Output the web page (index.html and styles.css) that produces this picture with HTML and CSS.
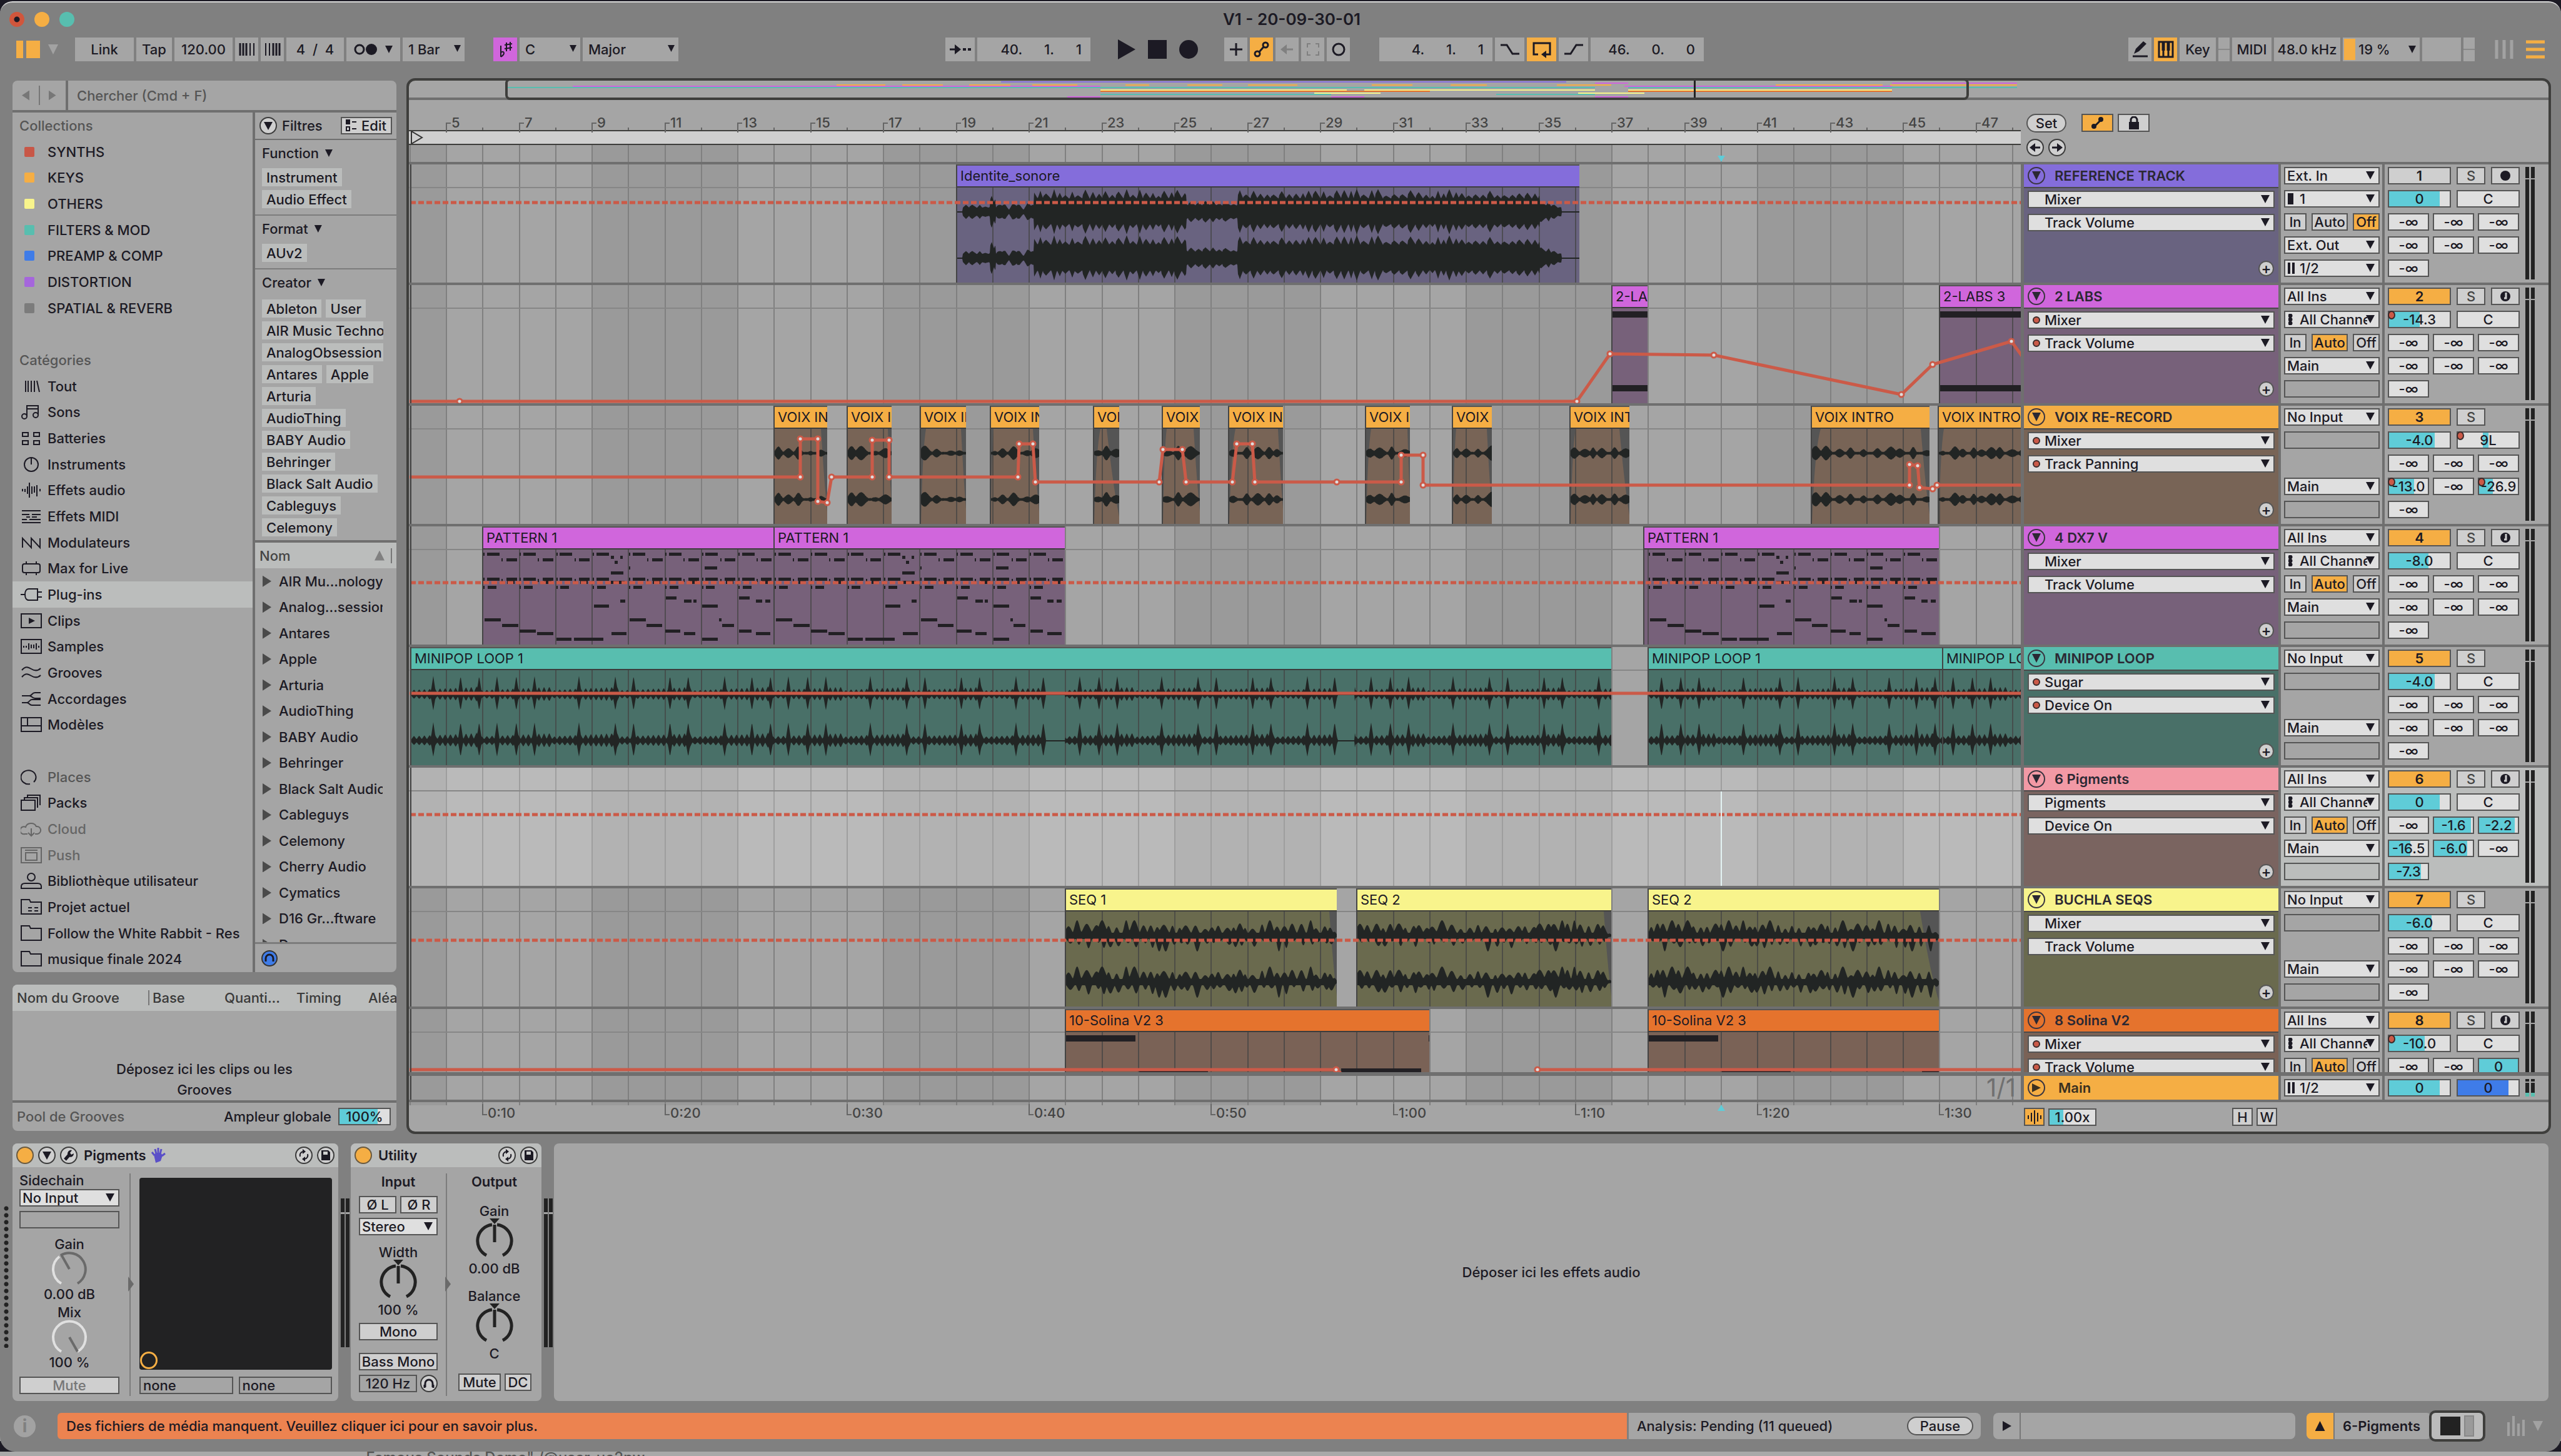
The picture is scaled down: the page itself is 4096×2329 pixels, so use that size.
FILE: index.html
```html
<!DOCTYPE html>
<html lang="fr">
<head>
<meta charset="utf-8">
<title>V1 - 20-09-30-01</title>
<link rel="stylesheet" href="styles.css">
</head>
<body>
<svg class="defs" aria-hidden="true">
  <symbol id="i-all" viewBox="0 0 34 26"><path d="M8 4v18M12 4v18M17 4v18M22 4v18M26 4l4 18"/></symbol>
  <symbol id="i-sounds" viewBox="0 0 34 26"><path d="M10 20V3h18v14M10 8h18"/><circle cx="6" cy="20" r="4"/><circle cx="24" cy="18" r="4"/></symbol>
  <symbol id="i-drums" viewBox="0 0 34 26"><path d="M3 4h9v6H3zM21 4h9v6h-9zM3 17h9v6H3zM21 17h9v6h-9z"/></symbol>
  <symbol id="i-inst" viewBox="0 0 34 26"><circle cx="17" cy="13" r="11"/><path d="M17 2v11"/></symbol>
  <symbol id="i-afx" viewBox="0 0 34 26"><path d="M3 11v4M7 11v5M11 7v12M14 1v24M18 7v12M22 7v10M26 5v18M31 11v4"/></symbol>
  <symbol id="i-mfx" viewBox="0 0 34 26"><path d="M2 4h30M2 10h12M18 10h14M9 14h6M18 14h8M2 18h8M14 18h18M2 23h30"/></symbol>
  <symbol id="i-mod" viewBox="0 0 34 26"><path d="M3 21V6l14 15V6l14 15V6"/></symbol>
  <symbol id="i-max" viewBox="0 0 34 26"><rect x="3" y="6" width="28" height="14" rx="3"/><path d="M9 2v4M25 2v4M9 20v4M25 20v4"/></symbol>
  <symbol id="i-plug" viewBox="0 0 34 26"><path d="M0 13h7M27 4H13c-4 0-6 4-6 9s2 9 6 9h14zM27 9h7M27 17h7"/></symbol>
  <symbol id="i-clip" viewBox="0 0 34 26"><path d="M1 2h32v22H1z"/><path class="fill" d="M13 8l10 5-10 5z"/></symbol>
  <symbol id="i-sample" viewBox="0 0 34 26"><path d="M1 2h32v22H1zM5 12v3M9 12v3M13 8v10M17 10v6M21 10v6M25 8v10M29 12v3"/></symbol>
  <symbol id="i-groove" viewBox="0 0 34 26"><path d="M2 9c6-7 10-5 15-2s10 4 15-1M2 20c6-7 10-5 15-2s10 4 15-1"/></symbol>
  <symbol id="i-tune" viewBox="0 0 34 26"><path d="M2 8h12c4 0 4-5 9-5h9M14 8c4 0 4 4 9 4h9M2 19h8c4 0 4-5 8-5h14M10 19c4 0 4 4 8 4h14"/></symbol>
  <symbol id="i-tmpl" viewBox="0 0 34 26"><path d="M1 2h32v22H1zM1 15h32M11 2v13"/></symbol>
  <symbol id="i-places" viewBox="0 0 34 26"><path d="M21 21a12 11 0 1 0-6 3"/></symbol>
  <symbol id="i-packs" viewBox="0 0 34 26"><path d="M1 9h22v16H1zM6 9V5h21v16M11 5V1h20v16"/></symbol>
  <symbol id="i-cloud" viewBox="0 0 34 26"><path d="M11 21H7a6 6 0 1 1 1-11 9 8 0 0 1 17-1 6 6 0 1 1 2 12h-4M17 12v12M12 19l5 5 5-5"/></symbol>
  <symbol id="i-push" viewBox="0 0 34 26"><path d="M1 1h32v24H1zM7 5h20M8 9h18v12H8z"/></symbol>
  <symbol id="i-user" viewBox="0 0 34 26"><circle cx="17" cy="7" r="6"/><path d="M1 25v-3c0-3 2-5 6-5h20c4 0 6 2 6 5v3z"/></symbol>
  <symbol id="i-proj" viewBox="0 0 34 26"><path d="M1 24V1h13l2 4h17v19zM12 14h6M22 14h6M12 19h6M22 19h6"/></symbol>
  <symbol id="i-folder" viewBox="0 0 34 26"><path d="M1 24V1h13l2 4h17v19z"/></symbol>
  <symbol id="i-swap" viewBox="0 0 28 28"><path d="M8 16a6 6 0 0 1 5-8M20 12a6 6 0 0 1-5 8"/><path class="fill" d="M12 4l5 4-5 4zM16 16l-5 4 5 4z"/></symbol>
  <symbol id="i-save" viewBox="0 0 28 28"><path class="fill" d="M7 6h11l3 3v13H7z"/><path class="cut" d="M10 8h7v5h-7z"/></symbol>
  <symbol id="i-down" viewBox="0 0 28 28"><path class="fill" d="M7 8h14l-7 13z"/></symbol>
  <symbol id="i-wrench" viewBox="0 0 28 28"><path d="M8 21l7-8" stroke-width="5"/><path class="fill" d="M12 12c0-4 3-7 7-6l-3 4 2 3 4-2c0 5-5 7-8 5z"/></symbol>
  <symbol id="knob" viewBox="-32 -36 64 68"><path class="arc" d="M-13 23A26 26 0 0 1-4-26M4-26A26 26 0 0 1 13 23M0 2V-26"/><path class="fill" d="M-8-36H8L0-27z"/></symbol>
</svg>

<div class="window">
  <header class="titlebar">
    <div class="lights"><i class="red"></i><i class="amber"></i><i class="green"></i></div>
    <h1>V1 - 20-09-30-01</h1>
  </header>

  <div class="toolbar">
    <div class="tools-left">
      <svg class="view-toggle" width="38" height="30" viewBox="0 0 38 30"><path d="M0 1h11v28H0zM16 1h22v28H16z"/></svg>
      <i class="tri dim view-tri"></i>
      <button class="w94">Link</button><button class="w57">Tap</button><input class="w93 c" value="120.00" aria-label="Tempo">
      <button class="w37" aria-label="Ralentir"><svg width="26" height="20"><path d="M2 0v20M7 0v20M12 0v20" stroke-width="3"/><path d="M18 0v20M24 0v20" stroke-width="2"/></svg></button>
      <button class="w37" aria-label="Accélérer"><svg width="26" height="20"><path d="M2 0v20M8 0v20" stroke-width="2"/><path d="M14 0v20M19 0v20M24 0v20" stroke-width="3"/></svg></button>
      <input class="w92 c" value="4  /  4" aria-label="Signature">
      <button class="w86" aria-label="Métronome"><svg width="38" height="20"><circle cx="9" cy="10" r="7" stroke-width="3"/><circle class="fill" cx="28" cy="10" r="9"/></svg><i class="tri sm"></i></button>
      <span class="tdd w99"><select aria-label="Quantification"><option>1 Bar</option></select></span>
      <button class="w38 scale" aria-label="Gamme"><svg width="28" height="30" viewBox="0 0 28 30"><path d="M7 9v18M7 20c5-4 8 2 0 7M16 4v14M22 3v14M13 8l12-2M13 14l12-2"/></svg></button>
      <span class="tdd w97"><select aria-label="Tonique"><option>C</option></select></span>
      <span class="tdd w153"><select aria-label="Mode"><option>Major</option></select></span>
    </div>
    <div class="tools-mid">
      <button class="w47" aria-label="Suivre"><svg width="34" height="20"><path d="M0 10h10" stroke-width="3"/><path class="fill" d="M8 2l10 8-10 8z"/><path class="fill" d="M21 8h5v4h-5zM29 8h5v4h-5z"/></svg></button>
      <input class="w181 r" value="40.      1.      1" aria-label="Position">
      <div class="transport">
        <button class="bare" aria-label="Lecture"><svg width="28" height="34"><path class="fill" d="M0 1l28 16L0 33z"/></svg></button>
        <button class="bare" aria-label="Stop"><svg width="30" height="30"><path class="fill" d="M0 0h30v30H0z"/></svg></button>
        <button class="bare" aria-label="Enregistrer"><svg width="30" height="30"><circle class="fill" cx="15" cy="15" r="15"/></svg></button>
      </div>
      <button class="w37" aria-label="Overdub"><svg width="22" height="22"><path d="M11 1v20M1 11h20" stroke-width="3"/></svg></button>
      <button class="w37 on" aria-label="Automation"><svg width="26" height="26"><circle cx="19" cy="6" r="4" stroke-width="3"/><circle cx="6" cy="20" r="4" stroke-width="3"/><path d="M9 17l7-8" stroke-width="3"/></svg></button>
      <button class="w37 off" aria-label="Réactiver"><svg width="22" height="20"><path d="M6 10h14" stroke-width="3"/><path class="fill" d="M0 10l10-8v16z"/></svg></button>
      <button class="w37 off" aria-label="Capture"><svg width="22" height="22"><path d="M2 8V2h5M15 2h5v6M20 14v6h-5M7 20H2v-6" stroke-width="2"/></svg></button>
      <button class="w37" aria-label="Session"><svg width="22" height="22"><circle cx="11" cy="11" r="9" stroke-width="3"/></svg></button>
      <input class="w181 r gap44" value="4.      1.      1" aria-label="Début de boucle">
      <button class="w47" aria-label="Punch in"><svg width="32" height="20"><path d="M1 3h10l9 14h11" stroke-width="3"/></svg></button>
      <button class="w47 on" aria-label="Boucle"><svg width="32" height="28"><path d="M10 22H3V4h26v18h-7" stroke-width="3"/><path class="fill" d="M23 16v12l-8-6z"/></svg></button>
      <button class="w47" aria-label="Punch out"><svg width="32" height="20"><path d="M1 17h10l9-14h11" stroke-width="3"/></svg></button>
      <input class="w181 r" value="46.      0.      0" aria-label="Longueur de boucle">
    </div>
    <div class="tools-right">
      <button class="w37" aria-label="Dessin"><svg width="26" height="28"><path class="fill" d="M3 21l3-8L18 1l5 4L11 17z"/><path d="M1 25h24" stroke-width="3"/></svg></button>
      <button class="w37 on" aria-label="Clavier"><svg width="26" height="28"><path d="M2 2h22v24H2zM9 14v12M17 14v12" stroke-width="3"/><path d="M9 2v14M17 2v14" stroke-width="5"/></svg></button>
      <button class="w58">Key</button><span class="led w18"></span><button class="w63">MIDI</button>
      <button class="w106">48.0 kHz</button>
      <button class="w123 cpu"><i class="load"></i>19 %<i class="tri sm"></i></button>
      <span class="cell w62"></span><span class="led w18"></span>
      <svg class="dimbars" width="30" height="30"><path d="M3 0v30M15 0v30M27 0v30" stroke-width="5"/></svg>
      <svg class="menubars" width="30" height="30"><path d="M0 3h30M0 15h30M0 27h30" stroke-width="5"/></svg>
    </div>
  </div>

  <main class="main">
    <aside class="side">
      <section class="browser panel">
        <div class="search">
          <button class="bare" aria-label="Précédent"><i class="tri left"></i></button><button class="bare nextb" aria-label="Suivant"><i class="tri right"></i></button>
          <input placeholder="Chercher (Cmd + F)" aria-label="Chercher">
        </div>
        <div class="cols">
          <ul class="tree">
            <li class="head">Collections</li>
            <li><i class="sw red"></i>SYNTHS</li>
            <li><i class="sw amber"></i>KEYS</li>
            <li><i class="sw yellow"></i>OTHERS</li>
            <li><i class="sw green"></i>FILTERS &amp; MOD</li>
            <li><i class="sw blue"></i>PREAMP &amp; COMP</li>
            <li><i class="sw violet"></i>DISTORTION</li>
            <li><i class="sw grey"></i>SPATIAL &amp; REVERB</li>
            <li></li>
            <li class="head">Catégories</li>
            <li><svg><use href="#i-all"/></svg>Tout</li>
            <li><svg><use href="#i-sounds"/></svg>Sons</li>
            <li><svg><use href="#i-drums"/></svg>Batteries</li>
            <li><svg><use href="#i-inst"/></svg>Instruments</li>
            <li><svg><use href="#i-afx"/></svg>Effets audio</li>
            <li><svg><use href="#i-mfx"/></svg>Effets MIDI</li>
            <li><svg><use href="#i-mod"/></svg>Modulateurs</li>
            <li><svg><use href="#i-max"/></svg>Max for Live</li>
            <li class="sel"><svg><use href="#i-plug"/></svg>Plug-ins</li>
            <li><svg><use href="#i-clip"/></svg>Clips</li>
            <li><svg><use href="#i-sample"/></svg>Samples</li>
            <li><svg><use href="#i-groove"/></svg>Grooves</li>
            <li><svg><use href="#i-tune"/></svg>Accordages</li>
            <li><svg><use href="#i-tmpl"/></svg>Modèles</li>
            <li></li>
            <li class="places"><svg><use href="#i-places"/></svg>Places</li>
            <li><svg><use href="#i-packs"/></svg>Packs</li>
            <li class="dimmed"><svg><use href="#i-cloud"/></svg>Cloud</li>
            <li class="dimmed"><svg><use href="#i-push"/></svg>Push</li>
            <li><svg><use href="#i-user"/></svg>Bibliothèque utilisateur</li>
            <li><svg><use href="#i-proj"/></svg>Projet actuel</li>
            <li><svg><use href="#i-folder"/></svg><span>Follow the White Rabbit - Research</span></li>
            <li><svg><use href="#i-folder"/></svg>musique finale 2024</li>
          </ul>
          <div class="filters">
            <div class="fhead"><span class="round"><svg><use href="#i-down"/></svg></span>Filtres<button class="edit"><svg width="18" height="20"><path class="fill" d="M0 0h7v8H0z"/><path d="M1 12h5v6H1zM10 4h7M10 15h7" stroke-width="2"/></svg>Edit</button></div>
            <div class="fgroup"><h2>Function<i class="tri sm"></i></h2><div class="tags"><button>Instrument</button><button>Audio Effect</button></div></div>
            <div class="fgroup"><h2>Format<i class="tri sm"></i></h2><div class="tags"><button>AUv2</button></div></div>
            <div class="fgroup creators"><h2>Creator<i class="tri sm"></i></h2><div class="tags"><button>Ableton</button><button>User</button><button>AIR Music Technology</button><button>AnalogObsession</button><button>Antares</button><button>Apple</button><button class="alone">Arturia</button><button>AudioThing</button><button>BABY Audio</button><button>Behringer</button><button>Black Salt Audio</button><button>Cableguys</button><button>Celemony</button></div></div>
            <div class="nom">Nom<i class="tri up"></i><b></b></div>
            <ul class="list">
              <li>AIR Mu...nology</li><li>Analog...session</li><li>Antares</li><li>Apple</li><li>Arturia</li><li>AudioThing</li><li>BABY Audio</li><li>Behringer</li><li>Black Salt Audio</li><li>Cableguys</li><li>Celemony</li><li>Cherry Audio</li><li>Cymatics</li><li>D16 Gr...ftware</li><li>Dawesome</li>
            </ul>
            <div class="preview"><svg width="28" height="28"><circle cx="14" cy="14" r="12"/><path d="M8 19v-5a6 6 0 0 1 12 0v5" stroke-width="3"/></svg></div>
          </div>
        </div>
      </section>
      <section class="groove panel">
        <table><thead><tr><th class="g1">Nom du Groove</th><th class="g2">Base</th><th class="g3">Quanti...</th><th class="g3">Timing</th><th>Aléatoire</th></tr></thead></table>
        <p>Déposez ici les clips ou les<br>Grooves</p>
        <div class="gfoot"><span>Pool de Grooves</span><label for="amp">Ampleur globale</label><input id="amp" class="num" value="100%" style="--v:76%"></div>
      </section>
    </aside>

    <section class="arr">
      <div class="overview"><svg id="overview"></svg><div class="viewrect"></div></div>
      <div class="arr-body">
        <div class="gridlayer"><svg id="grid"></svg></div>
        <div class="ruler-row">
          <div class="ruler"><div class="bars" id="bars"></div><div class="loopbar"><svg width="20" height="20"><path d="M1 0l17 10L1 20z"/></svg></div><div class="scrub" id="scrub"></div></div>
          <div class="rtools">
            <div class="rline"><button class="pill">Set</button><button class="sq on a1" aria-label="Verrouiller les enveloppes"><svg width="22" height="22"><path d="M6 16L16 6" stroke-width="3"/><circle class="fill" cx="5" cy="16" r="4"/><circle class="fill" cx="16" cy="5" r="4"/></svg></button><button class="sq" aria-label="Verrou"><svg width="20" height="22"><path d="M5 11V6a5 5 0 0 1 10 0v5" stroke-width="3"/><path class="fill" d="M2 9h16v12H2z"/></svg></button></div>
            <div class="rline"><button class="round" aria-label="Repère précédent"><svg viewBox="0 0 28 28"><path d="M10 14h12" stroke-width="3"/><path class="fill" d="M5 14l9-7v14z"/></svg></button><button class="round" aria-label="Repère suivant"><svg viewBox="0 0 28 28"><path d="M6 14h12" stroke-width="3"/><path class="fill" d="M23 14l-9-7v14z"/></svg></button></div>
          </div>
        </div>
        <div class="tracks" id="tracks"></div>
        <div class="mainrow">
          <div class="lane"><span class="frac">1/1</span></div>
          <div class="thead main"><span class="fold"><i class="tri right"></i></span>Main</div>
          <div class="io"><span class="dd ic"><i class="st"></i><select aria-label="Sortie Main"><option>1/2</option></select></span></div>
          <div class="mix"><div class="mrow"><input class="num wide" value="0" style="--v:83%" aria-label="Volume Main"><input class="num wide cue" value="0" style="--v:83%" aria-label="Volume Cue"></div><div class="meter live"><i></i><i></i></div></div>
        </div>
        <div class="afoot">
          <div class="times" id="times"></div>
          <div class="zoomtools"><button class="sq wav on" aria-label="Scrub"><svg width="24" height="24"><path d="M2 9v6M7 5v14M12 1v22M17 5v14M22 9v6" stroke-width="2"/></svg></button><input class="num zoomv" value="1.00x" style="--v:30%" aria-label="Zoom"><button class="sq hw first">H</button><button class="sq hw">W</button></div>
        </div>
      </div>
    </section>
  </main>

  <section class="devices">
    <div class="dots"></div>
    <article class="device pig">
      <header><i class="power"></i><span class="round"><svg><use href="#i-down"/></svg></span><span class="round"><svg><use href="#i-wrench"/></svg></span><h2>Pigments</h2><svg class="hand" width="24" height="26"><path d="M6 13L2 8M9 11L7 3M12 10V1M15 11l2-8M18 14l5-4"/><path class="palm" d="M5 12l4-3h7l3 4-3 9-8 3z"/></svg><span class="round push"><svg><use href="#i-swap"/></svg></span><span class="round"><svg><use href="#i-save"/></svg></span></header>
      <div class="dbody">
        <div class="pcol">
          <label for="sc">Sidechain</label>
          <span class="dd"><select id="sc"><option>No Input</option></select></span>
          <span class="blank"></span>
          <div class="kn k1"><span>Gain</span><svg width="60" height="56" viewBox="-30 -28 60 56"><path class="soft" d="M-14-22A26 26 0 0 1 13 23M0 0L-13-23"/><path class="lit" d="M-13 23A26 26 0 0 1-16-20"/></svg><span>0.00 dB</span></div>
          <div class="kn k2"><span>Mix</span><svg width="60" height="56" viewBox="-30 -28 60 56"><path class="lit" d="M-13 23A26 26 0 1 1 13 23"/><path class="soft" d="M0 0L13 23"/></svg><span>100 %</span></div>
          <button class="box mute">Mute</button>
        </div>
        <div class="vsep"><i class="tri right"></i></div>
        <div class="xy"><div class="pad"><i></i></div><div class="axes"><button class="none">none</button><button class="none">none</button></div></div>
      </div>
    </article>
    <div class="meter dm"><i></i><i></i></div>
    <article class="device util">
      <header><i class="power"></i><h2>Utility</h2><span class="round push"><svg><use href="#i-swap"/></svg></span><span class="round"><svg><use href="#i-save"/></svg></span></header>
      <div class="dbody">
        <div class="ucol">
          <h3>Input</h3>
          <div class="pair"><button class="box">Ø L</button><button class="box">Ø R</button></div>
          <span class="dd"><select aria-label="Canal"><option>Stereo</option></select></span>
          <div class="kn k3"><span>Width</span><svg width="64" height="68"><use href="#knob"/></svg><span>100 %</span></div>
          <button class="box">Mono</button>
          <button class="box bm">Bass Mono</button>
          <div class="pair hz"><input class="hzv" value="120 Hz" aria-label="Fréquence"><span class="round"><svg viewBox="0 0 28 28"><path d="M8 20v-6a6 6 0 0 1 12 0v6M7 16v5M21 16v5" stroke-width="3"/></svg></span></div>
        </div>
        <div class="vsep"><i class="tri right"></i></div>
        <div class="ocol">
          <h3>Output</h3>
          <div class="kn k4"><span>Gain</span><svg width="64" height="68"><use href="#knob"/></svg><span>0.00 dB</span></div>
          <div class="kn k5"><span>Balance</span><svg width="64" height="68"><use href="#knob"/></svg><span>C</span></div>
          <div class="pair end"><button class="box">Mute</button><button class="box">DC</button></div>
        </div>
      </div>
    </article>
    <div class="meter dm"><i></i><i></i></div>
    <div class="drop">Déposer ici les effets audio</div>
  </section>

  <footer class="status">
    <span class="info">i</span>
    <a class="warn" href="#missing">Des fichiers de média manquent. Veuillez cliquer ici pour en savoir plus.</a>
    <div class="analysis">Analysis: Pending (11 queued)<button class="pill">Pause</button></div>
    <div class="msg"><i class="tri right"></i><span></span></div>
    <div class="seltrack"><button class="on" aria-label="Afficher"><i class="tri up"></i></button><span>6-Pigments</span></div>
    <div class="thumb"><i></i><b></b></div>
    <svg class="dimbars" width="30" height="32"><path d="M3 10v22M11 0v32M19 12v20M27 6v26" stroke-width="4"/></svg>
    <i class="tri dim"></i>
  </footer>
</div>
<div class="behind"><span>- Famous Sounds Demo" /@user-ue2pw</span></div>
<script src="app.js"></script>
</body>
</html>
```
FILE: styles.css
```css
:root{--ink:#1c1a24;--bg:#808080;--panel:#a5a5a5;--light:#bbbdbc;--line:#6f6f6f;--edge:#555;--field:#dfdfdf;--btn:#cfcfcf;--orange:#f5ae44;--cyan:#5fccd8;--red:#cb5a48;--green:#58beaf;--violet:#846ddb;--pink:#d066dc}
*{box-sizing:border-box}
body{margin:0;height:100vh;min-height:1800px;display:flex;flex-direction:column;background:#1c1a24;color:var(--ink);font:500 22px/28px Inter,"Liberation Sans",sans-serif;padding-top:2px}
button,input,select{font:inherit;color:inherit;border:0;border-radius:0;margin:0;padding:0;background:none;appearance:none;min-width:0;outline:0}
button{display:flex;align-items:center;justify-content:center;white-space:nowrap}
ul{list-style:none;margin:0;padding:0}
h1,h2,h3,p{margin:0;font:inherit}
svg{fill:none;stroke:currentColor;stroke-width:2;flex:none}
.fill{fill:currentColor;stroke:none}
.cut{fill:#cfcfcf;stroke:none}
.defs{position:absolute;width:0;height:0}
.window{flex:1;min-height:0;display:flex;flex-direction:column;background:var(--bg);border-top:2px solid #d8d8d8;border-radius:20px 20px 24px 24px;position:relative;z-index:1}
.behind{height:7px;overflow:hidden;background:#a9a9a9;color:#555;font-size:24px;padding-left:568px;line-height:20px;box-shadow:0 -24px 0 #a9a9a9}
.tri{display:inline-block;width:16px;height:16px;background:currentColor;clip-path:polygon(0 0,100% 0,50% 100%);flex:none}
.tri.sm{width:12px;height:12px}
.tri.right{clip-path:polygon(0 0,100% 50%,0 100%)}
.tri.left{clip-path:polygon(100% 0,100% 100%,0 50%)}
.tri.up{clip-path:polygon(50% 0,100% 100%,0 100%)}
.tri.dim{color:#a2a2a2}
.red{background:#c85747}.amber{background:var(--orange)}.green{background:var(--green)}.yellow{background:#f8f48c}.blue{background:#3f7ce8}.violet{background:#a566dc}.grey{background:#7c7c7c}

.titlebar{display:flex;align-items:center;height:54px;position:relative;justify-content:center}
.lights{position:absolute;left:15px;display:flex;gap:16px}
.lights i{width:24px;height:24px;border-radius:50%}
.lights i.red{background:radial-gradient(#1c1a24 0 4px,#d0563c 5px)}
.titlebar h1{font-size:26px;font-weight:600;margin-left:36px}

.toolbar{display:flex;align-items:center;height:42px;margin-bottom:25px;padding-right:26px}
.toolbar>div{display:flex;gap:4px;align-items:center}
.tools-left{flex:0 0 1512px;padding-left:26px}
.toolbar button,.toolbar input,.tdd,.cell,.led{height:38px;background:var(--panel)}
.toolbar button.on,.on{background:var(--orange)}
.toolbar .off{color:#808080}
.toolbar .bare{background:none}
.view-toggle{fill:var(--orange);stroke:none}
.view-tri{margin:0 23px 0 9px}
.c{text-align:center}.r{text-align:right}
.toolbar input.r{padding-right:14px}
.w18{width:18px}.w37{width:37px}.w38{width:38px}.w47{width:47px}.w57{width:57px}.w58{width:58px}.w62{width:62px}.w63{width:63px}.w86{width:86px;gap:12px}.w92{width:92px}.w93{width:93px}.w94{width:94px}.w97{width:97px}.w99{width:99px}.w106{width:106px}.w123{width:123px}.w153{width:153px}.w181{width:181px}
.toolbar .scale{background:var(--pink);margin-left:42px}
.tdd{position:relative;display:flex}
.tdd select{width:100%;padding-left:9px}
.tdd::after,.dd::after{content:"";position:absolute;right:6px;top:50%;margin-top:-7px;width:14px;height:13px;background:var(--ink);clip-path:polygon(0 0,100% 0,50% 100%);pointer-events:none}
.tdd::after{width:11px;height:11px}
.toolbar .transport{display:flex;gap:20px;margin:0 38px 0 40px}
.gap44{margin-left:43px}
.tools-right{margin-left:auto}
.led{background:linear-gradient(var(--panel) 18px,#8a8a8a 18px 20px,var(--panel) 20px)}
.cpu{gap:0;position:relative}
.toolbar .cpu{justify-content:flex-start}
.cpu .load{width:18px;height:34px;background:var(--orange);margin:0 5px 0 2px}
.cpu .tri{margin-left:auto;margin-right:6px}
.dimbars{color:#a2a2a2}
.tools-right .dimbars{margin-left:28px}
.menubars{color:var(--orange);margin-left:16px}

.main{flex:1 1 0px;min-height:0;display:flex;padding-right:16px;gap:16px}
.side{flex:0 0 614px;min-width:0;width:614px;margin:4px 0 5px 20px;display:flex;flex-direction:column;gap:20px}
.panel{background:var(--panel);border-radius:8px;overflow:hidden}
.browser{flex:1 1 0px;min-height:0;display:flex;flex-direction:column}
.search{display:flex;height:51px;flex:none;border-bottom:4px solid var(--line);color:#777}
.search .bare{width:42px}
.search .nextb{border-right:4px solid var(--line);width:47px;position:relative}
.search .nextb::before{content:"";position:absolute;left:0;top:8px;bottom:8px;width:2px;background:#777}
.search .tri{width:12px}
.search input{flex:1;padding-left:14px}
.search input::placeholder{color:#555;opacity:1}
.cols{flex:1;display:flex;min-height:0}
.tree{flex:1;display:flex;flex-direction:column;border-right:4px solid var(--line);min-width:0}
.tree li{flex:1 1 0px;min-height:0;display:flex;align-items:center;padding-left:13px;gap:9px;white-space:nowrap}
.tree li svg{width:34px;height:26px}
.tree li span{overflow:hidden;margin-right:20px}
.tree .head{padding-left:11px;color:#555}
.tree .places,.tree .dimmed{color:#555}
.tree .places svg{color:var(--ink)}
.tree .dimmed{color:#666}
.tree .sel{background:var(--light)}
.sw{width:16px;height:16px;margin:0 12px 0 6px;border-radius:2px}
.filters{flex:0 0 226px;width:226px;display:flex;flex-direction:column;min-height:0}
.fhead{display:flex;align-items:center;height:44px;padding:0 7px;gap:8px;border-bottom:2px solid var(--line)}
.round{width:28px;height:28px;border-radius:50%;border:2px solid #3c3c3c;background:var(--btn);display:flex;align-items:center;justify-content:center;flex:none}
.round svg{width:28px;height:28px}
.edit{margin-left:auto;background:var(--btn);border:2px solid var(--edge);height:28px;padding:0 7px 0 6px;gap:7px}
.fgroup{padding:7px 0 10px 11px;border-bottom:2px solid #7c7c7c}
.fgroup h2{display:flex;align-items:center;gap:10px;height:28px}
.tags{display:flex;flex-wrap:wrap;gap:6px 7px;margin-top:10px;margin-right:20px}
.tags button{height:29px;background:var(--light);padding:0 7px;max-width:194px;overflow:hidden;justify-content:flex-start}
.tags .alone{margin-right:60px}
.creators{border-bottom:4px solid var(--line);padding-bottom:6px}
.creators .tags{margin-top:13px}
.nom{display:flex;align-items:center;height:41px;flex:none;background:var(--light);padding:0 7px;color:#444}
.nom .tri{margin-left:auto;color:#808080}
.nom b{width:2px;height:24px;background:#777;margin-left:10px}
.list{flex:1 1 0px;overflow:hidden;min-height:0}
.list li{height:calc(100% / 14.4);display:flex;align-items:center;gap:12px;padding-left:12px;margin-right:22px;overflow:hidden;white-space:nowrap}
.list li::before{content:"";width:14px;height:18px;background:#4a4a4a;clip-path:polygon(0 0,100% 50%,0 100%);flex:none}
.preview{height:48px;flex:none;border-top:3px solid #7c7c7c;display:flex;align-items:center;padding-left:9px}
.preview circle{fill:#3f7ce8;stroke:#333}

.groove{height:234px;flex:none;display:flex;flex-direction:column}
.groove table{table-layout:fixed;border-collapse:collapse;background:var(--light);width:614px;height:42px;color:#3a3a3a}
.groove th{font-weight:500;text-align:left;padding:0 0 0 7px;overflow:hidden;white-space:nowrap}
.g1{width:217px}.g2{width:115px;background:linear-gradient(#777,#777) 0 50%/2px 24px no-repeat}.g3{width:115px}
.groove p{flex:1;text-align:center;line-height:33px;padding-top:77px}
.gfoot{height:50px;border-top:4px solid var(--line);display:flex;align-items:center;padding:0 9px 0 7px}
.gfoot span{color:#555;margin-right:auto}
.gfoot .num{width:84px;margin-left:11px}

.num{height:28px;border:2px solid var(--edge);text-align:center;background:linear-gradient(90deg,var(--cyan) var(--v,0%),var(--field) var(--v,0%));width:66px}
.num.wide{width:101px}
.num.cue{background:linear-gradient(90deg,#3f7ce8 var(--v),var(--field) var(--v))}
.num.pan{background:linear-gradient(90deg,var(--field) 41%,var(--cyan) 41% 51%,var(--field) 51%)}
.dd{position:relative;display:block;height:28px;border:2px solid var(--edge);background:var(--field)}
.dd select{width:100%;height:24px;display:block;padding:0 18px 0 3px;line-height:24px;overflow:hidden;text-overflow:clip}
.dd.ic select{padding-left:23px}
.dd .ch,.dd .st,.dd .mo{position:absolute;left:4px;top:3px;width:9px;height:18px;background:var(--ink)}
.dd .ch{width:7px;left:5px;background:radial-gradient(circle at 3px 3px,var(--ink) 3px,transparent 4px) 0 0/7px 6px}
.dd .st{width:11px;background:linear-gradient(90deg,var(--ink) 4px,transparent 4px 7px,var(--ink) 7px)}
.blank{display:block;height:28px;border:2px solid var(--edge)}
.none-row{display:block;height:28px}

.arr{flex:1;min-width:0;display:flex;flex-direction:column;border:4px solid #3e3e3c;border-radius:14px;background:var(--panel);overflow:hidden}
.overview{height:31px;flex:none;border-bottom:4px solid var(--line);position:relative}
.overview svg{position:absolute;left:0;top:0;width:100%;height:27px;stroke:none}
.viewrect{position:absolute;left:154px;top:-4px;width:2341px;height:35px;border:4px solid #3e3e3c;border-radius:8px}
.arr-body{flex:1;display:flex;flex-direction:column;position:relative;min-height:0}
.gridlayer{position:absolute;left:0;right:844px;top:72px;bottom:42px;overflow:hidden}
.gridlayer svg{width:100%;height:100%;stroke:none}
.ruler-row{display:flex;height:103px;flex:none;border-bottom:4px solid var(--line);position:relative}
.ruler{flex:1;position:relative;overflow:hidden}
.bars{height:48px;position:relative;color:#444}
.bars span,.times span{position:absolute;white-space:nowrap}
.bars span{top:22px;padding-left:9px}
.bars span::before{content:"";position:absolute;left:0;top:14px;width:6px;height:14px;border-left:2px solid #666;border-top:2px solid #666}
.bars i{position:absolute;bottom:0;width:2px;height:4px;background:#666}
.loopbar{height:24px;background:#cfcfcf;border-top:2px solid #3e3e3c;border-bottom:2px solid #3e3e3c;padding-left:3px}
.loopbar svg{display:block;stroke:#333}
.scrub{height:27px;position:relative}
.scrub i,.times i.pos{position:absolute;width:12px;height:10px;background:var(--cyan);bottom:0;clip-path:polygon(0 0,100% 0,50% 100%)}
.rtools{flex:0 0 844px;padding:22px 0 0 9px;display:flex;flex-direction:column;gap:10px;background:var(--panel)}
.rline{display:flex;gap:7px}
.pill{height:30px;border:2px solid var(--edge);border-radius:15px;background:var(--btn);padding:0 12px}
.rline .pill{width:64px}
.a1{margin-left:17px}
.sq{width:51px;height:29px;border:2px solid var(--edge);background:var(--btn)}
.sq.on{background:var(--orange)}
.tracks{flex:1 1 0px;min-height:0;overflow:hidden;position:relative}
.track,.mainrow{display:flex}
.track{height:193px;border-bottom:4px solid var(--line)}
.lane{flex:1;position:relative;overflow:hidden;min-width:0}
.lane::before{content:"";position:absolute;left:0;right:0;top:36px;height:2px;background:#868686}
.lane::after{content:"";position:absolute;left:2px;top:0;bottom:0;width:2px;background:#444}
.selected .lane{background:rgba(255,255,255,.24)}
.selected .io,.selected .mix{background:var(--light)}
.cursor{position:absolute;top:38px;bottom:0;width:2px;background:#e4f4f4}
.clip{position:absolute;top:0;bottom:0;border-top:2px solid #555;border-left:2px solid #444;overflow:hidden}
.clip b{display:block;height:35px;background:var(--h);border-bottom:2px solid #3c3c3c;font-weight:400;padding-left:5px;line-height:33px;white-space:nowrap;overflow:hidden}
.clip svg{position:absolute;left:0;top:35px;stroke:none}
.auto{position:absolute;left:0;top:0;width:100%;height:100%;stroke:var(--red);stroke-width:5}
.auto circle{fill:#ddd;stroke-width:3}
.auto .dash{stroke-dasharray:9 4}
.thead{flex:0 0 416px;border:solid var(--line);border-width:0 4px 0 5px;background:var(--b)}
.thead .name{display:flex;align-items:center;height:38px;background:var(--h);border-bottom:2px solid #4a4a4a;padding-left:6px;gap:15px;font-weight:600;color:#2b2833}
.fold{width:28px;height:28px;border:2px solid #3a3540;border-radius:50%;display:flex;align-items:center;justify-content:center;flex:none}
.fold .tri{width:14px;height:14px}
.thead .dd{margin:4px 6px 9px 6px}
.thead .dd+.dd{margin-top:0}
.thead .dd select{padding-left:25px}
.dd .dot{position:absolute;left:6px;top:6px;width:12px;height:12px;border-radius:50%;background:var(--red);border:2px solid #3a2a2a}
.plus{margin:47px 7px 0 auto;width:25px;height:25px;border:2px solid var(--edge);border-radius:50%;background:var(--btn);font-size:24px;line-height:20px}
.io{flex:0 0 166px;border-right:4px solid var(--line);background:var(--panel);padding:4px 4px 0 5px;display:flex;flex-direction:column;gap:9px}
.mon{display:flex;gap:8px}
.mon button{height:28px;border:2px solid var(--edge);background:var(--btn)}
.mon button.on{background:var(--orange)}
.mon button:nth-child(1){width:36px}.mon button:nth-child(2){width:58px}.mon button:nth-child(3){flex:1}
.mix{flex:0 0 262px;background:var(--panel);padding:4px 0 0 5px;display:grid;grid-template-columns:211px 15px;gap:9px}
.strip{display:flex;flex-direction:column;gap:9px}
.mrow{display:flex;gap:9px}
.sends{display:flex;gap:6px}
.cellbox{position:relative;display:flex}
.cellbox .dot{position:absolute;left:0;top:0;width:12px;height:14px;border-radius:50%;background:var(--red);border:2px solid #3a2a2a}
.act{width:101px;height:28px;border:2px solid var(--edge);background:var(--orange);font-weight:600}
.act.off{background:var(--btn)}
.sb{width:46px;height:28px;border:2px solid var(--edge);background:var(--btn);color:#444}
.sb svg{color:var(--ink)}
.meter{display:flex;gap:3px;height:180px}
.meter i{width:6px;height:100%;background:linear-gradient(#222 18px,var(--panel) 18px 20px,#222 20px)}
.mainrow{height:48px;flex:none;border-top:6px solid var(--line);border-bottom:4px solid var(--line);position:relative}
.mainrow .lane::before{display:none}
.thead.main{flex:0 0 416px;gap:21px;align-items:center;background:var(--orange);display:flex;padding:0 0 0 6px;font-weight:600;color:#3b3020}
.mainrow .io,.mainrow .mix{padding-top:5px}
.meter.live{height:28px}
.meter.live i{background:linear-gradient(#222 4px,var(--panel) 4px 6px,#222 6px 22px,var(--green) 22px)}
.frac{position:absolute;right:8px;top:1px;font-size:40px;line-height:36px;color:#707070;font-weight:400}
.afoot{display:flex;height:47px;flex:none}
.times{flex:1;position:relative;overflow:hidden;color:#444}
.times span{top:3px;padding-left:9px}
.times span::before{content:"";position:absolute;left:0;top:0;width:6px;height:16px;border-left:2px solid #666;border-bottom:2px solid #666}
.times i.pos{top:4px;bottom:auto;clip-path:polygon(50% 0,100% 100%,0 100%)}
.zoomtools{flex:0 0 844px;display:flex;align-items:center;padding-left:5px}
.zoomtools .wav{width:33px}
.zoomtools .zoomv{width:77px;margin-left:6px}
.zoomtools .hw{width:33px;margin-left:6px}
.zoomtools .first{margin-left:217px}

.devices{display:flex;height:412px;flex:none;margin:15px 20px 0 0}
.dots{width:8px;margin:100px 6px 85px 6px;background:radial-gradient(circle at 4px 4px,#222 3px,transparent 4px) 0 0/8px 11px}
.device{background:var(--panel);border-radius:8px;overflow:hidden;display:flex;flex-direction:column}
.device header{display:flex;align-items:center;height:38px;background:var(--light);padding:0 6px;gap:7px}
.device header h2{font-weight:600;margin-left:3px}
.power{width:28px;height:28px;border-radius:50%;background:var(--orange);border:2px solid #6a5a40}
.push{margin-left:auto}
.hand{color:#5a4fc8;stroke-width:3}.palm{fill:#5a4fc8;stroke:none}
.pig{width:521px}
.util{width:305px}
.dbody{display:flex;flex:1}
.pcol{width:171px;padding:7px 0 0 11px;display:flex;flex-direction:column}
.pcol label{height:28px}
.pcol .blank{margin-top:7px}
.kn{display:flex;flex-direction:column;align-items:center}
.kn svg{color:#222;stroke-width:5}
.kn span{height:24px;line-height:24px}
.k1{margin-top:13px}.k2{margin-top:5px}
.lit{stroke:#e0e0e0}.soft{stroke:#6a6a6a}
.k1 svg,.k2 svg{stroke-width:4}
.box{height:28px;border:2px solid var(--edge);background:var(--btn)}
.pcol .mute{margin-top:11px;color:#777}
.vsep{width:34px;position:relative;background:linear-gradient(#7c7c7c,#7c7c7c) 16px 10px/2px 356px no-repeat;display:flex;align-items:center}
.vsep .tri{margin-left:14px;width:9px;height:24px;color:#6a6a6a}
.xy{flex:1;padding:17px 10px 0 0;margin-left:-2px}
.pad{height:307px;background:#222223;border-radius:4px;position:relative}
.pad i{position:absolute;left:1px;bottom:1px;width:28px;height:28px;border:3px solid var(--orange);border-radius:50%}
.axes{display:flex;gap:9px;margin-top:11px}
.none{flex:1;height:28px;border:2px solid var(--edge);justify-content:flex-start;padding-left:4px}
.dm{width:20px;height:238px;margin-top:88px;padding-left:4px;gap:2px}
.dm i{background:linear-gradient(#222 22px,var(--panel) 22px 25px,#222 25px)}
.ucol{width:139px;padding:9px 0 0 13px;display:flex;flex-direction:column}
.device h3{text-align:center;font-weight:600}
.pair{display:flex;gap:6px}
.ucol .pair{margin:9px 0 7px}
.ucol .pair .box{flex:1}
.k3{margin-top:15px}
.k3+.box{margin-top:9px}
.ucol .bm{margin-top:20px}
.ucol .hz{margin:7px 0 0;align-items:center;gap:5px}
.hzv{flex:1;height:28px;border:2px solid var(--edge);text-align:center}
.util .vsep{width:29px;background-position:13px 10px}
.util .vsep .tri{margin-left:12px}
.ocol{flex:1;padding:9px 14px 0 0;display:flex;flex-direction:column}
.k4{margin-top:21px}.k5{margin-top:20px}
.ocol .end{margin-top:20px;padding-left:4px}
.end .box:first-child{width:68px}.end .box{width:43px}
.drop{flex:1;background:var(--panel);border-radius:8px;display:flex;align-items:center;justify-content:center}

.status{display:flex;align-items:center;flex:none;height:42px;margin:19px 29px 20px 22px}
.info{width:35px;height:35px;border-radius:50%;background:#a2a2a2;color:var(--bg);text-align:center;font-weight:700;font-size:28px;line-height:35px;margin-right:35px}
.warn{flex:1;height:42px;line-height:42px;background:#ec8350;border-radius:6px 0 0 6px;padding-left:14px;color:inherit;text-decoration:none}
.analysis{flex:0 0 563px;height:42px;margin-left:3px;background:var(--panel);border-radius:0 8px 8px 0;display:flex;align-items:center;justify-content:space-between;padding:0 12px 0 13px}
.analysis .pill{width:106px}
.msg{flex:0 0 483px;height:42px;margin-left:20px;background:var(--panel);border-radius:8px;display:flex;align-items:center}
.msg .tri{margin:0 13px 0 15px;width:14px}
.msg span{width:2px;height:42px;background:#777}
.seltrack{flex:0 0 200px;height:42px;margin-left:18px;background:var(--panel);border-radius:8px;overflow:hidden;display:flex;align-items:center;font-weight:600}
.seltrack button{width:45px;height:42px;border-right:2px solid #777;margin-right:13px;background:var(--orange)}
.thumb{width:90px;height:50px;margin:0 34px 0 -4px;border:4px solid #3e3e3c;border-radius:10px;background:#bbb;display:flex;align-items:center;padding-left:14px;gap:6px;z-index:1}
.thumb i{width:32px;height:30px;background:#222}
.thumb b{width:16px;height:34px;background:#9a9a9a;border:2px solid #888}
.status>.tri{margin-left:12px}
```
FILE: app.js
```js
const BAR = 58.25;
const X = bar => Math.round(59 + (bar - 5) * BAR);
const $ = id => document.getElementById(id);

// Seeded random numbers keep every waveform the same from load to load.
function rng(seed) {
  return () => {
    seed = (seed * 1664525 + 1013904223) % 4294967296;
    return seed / 4294967296;
  };
}

/* ---------- grid, rulers, overview ---------- */
let grid = '';
for (let b = 1; b < 49; b += 4) {
  const dark = ((b - 1) / 4) % 2 === 0;
  grid += `<rect x="${X(b)}" y="0" width="${X(b + 4) - X(b)}" height="100%" fill="${dark ? '#9a9a9a' : '#a5a5a5'}"/>`;
}
for (let b = 4; b < 49; b++) grid += `<rect x="${X(b)}" y="0" width="2" height="100%" fill="#808080"/>`;
$('grid').innerHTML = grid;

let bars = '';
for (let b = 5; b < 49; b++) bars += b % 2 ? `<span style="left:${X(b)}px">${b}</span>` : `<i style="left:${X(b)}px"></i>`;
$('bars').innerHTML = bars;
$('scrub').innerHTML = `<i style="left:${X(40) - 5}px"></i>`;

let times = `<i class="pos" style="left:${X(40) - 5}px"></i>`;
for (let s = 10; s <= 90; s += 10) {
  times += `<span style="left:${X(1 + s / 2)}px">${Math.floor(s / 60)}:${String(s % 60).padStart(2, '0')}</span>`;
}
$('times').innerHTML = times;

const O = b => Math.round(156 + (b - 4) * 52.75);
const voice = [[14, 15.48], [16, 17.24], [18.02, 19.28], [19.94, 21.3], [22.76, 23.49], [24.65, 25.71], [26.48, 27.98], [30.24, 31.47], [32.62, 33.72], [35.85, 37.49], [42.48, 45.73], [45.96, 50]];
const ov = [
  [1, '#846ddb', [[19, 36.13]]],
  [3, '#d066dc', [[37, 38], [46, 50]]],
  [6, '#f5ae44', voice],
  [8, '#d066dc', [[6, 22], [37.9, 46]]],
  [10, '#58beaf', [[4, 37], [38, 50]]],
  [14, '#f8f48c', [[22, 29.47], [30, 37], [38, 46]]],
  [16, '#e5732d', [[22, 32], [38, 46]]],
  [19, '#f8f48c', [[28.5, 30.5], [36.5, 38.5]]],
  [21, '#58beaf', [[22, 29], [34, 37]]],
  [25, '#d066dc', [[21, 22], [29, 30], [37, 38]]]
];
$('overview').innerHTML = ov.map(([y, c, l]) => l.map(([a, b]) => `<rect x="${O(a)}" y="${y}" width="${O(Math.min(b, 49.8)) - O(a)}" height="2" fill="${c}"/>`).join('')).join('') +
  `<rect x="${O(40)}" y="0" width="3" height="27" fill="#222"/>`;

/* ---------- waveforms ---------- */
function wave(w, cy, step, fn) {
  let up = '', down = '';
  for (let x = 0; x <= w; x += step) {
    const [u, d] = fn(x);
    up += `L${x} ${(cy - Math.max(1, u)).toFixed(1)}`;
    down = `L${x} ${(cy + Math.max(1, d)).toFixed(1)}` + down;
  }
  return `<path fill="#222524" d="M0 ${cy}${up}${down}Z"/>`;
}
const waves = {
  mix(a, w, cy) {
    const r = rng(7);
    const env = b => b < 19.15 ? 1 : b < 19.9 ? 10 : b < 20.05 ? 22 : b < 21.1 ? 5 + 9 * Math.abs(Math.sin(b * 8)) : b < 25.3 ? 31 : b < 26.7 ? 15 : b < 35 ? 31 : b < 35.6 ? 16 * (35.8 - b) / .8 + 3 : 1;
    let tip = 4, reach = 5, peak = .6;
    return wave(w, cy, 1, x => {
      const b = a + x / BAR, e = env(b);
      if (e <= 1) return [1, 1];
      if (x > tip + reach) { tip = x + 4; reach = 4 + r() * 5; peak = .3 + r() * .7; }
      const m = peak * Math.max(0, 1 - Math.abs(x - tip) / reach);
      const k = e * (.68 + .5 * m);
      return [k, k * (.9 + .08 * m)];
    });
  },
  loop(a, w, cy) {
    const tall = [.35, .88, 1.38, 2.6, 3.6, 4.1, 5.1, 5.6, 6.6, 7.35, 7.86];
    return wave(w, cy, 1, x => {
      const b = a + x / BAR, m = ((b - 6) % 8 + 8) % 8;
      if ((b > 21.42 && b < 21.95) || (b > 29.43 && b < 29.9)) return [1, 1];
      const i = Math.floor(b * 7), f = b * 7 - i;
      const h = 5 + 6 * rng(i % 56 * 7919 + 5)();
      let v = 2 + h * Math.max(0, 1 - Math.abs(f - .5) * 1.8);
      for (const t of tall) v = Math.max(v, 30 * (1 - Math.abs(m - t) * 13));
      return [v, v * .85];
    });
  },
  seq(a, w, cy) {
    const r = rng(Math.round(a * 13) + 3), up = [], dn = [];
    for (let p = 4; p < w; p += 8 + r() * 8) {
      const k = r();
      up.push([p, k > .86 ? 25 : 11 + 9 * r(), 4 + r() * 4]);
      dn.push([p + 3, k < .14 ? 25 : 8 + 12 * r(), 4 + r() * 3]);
    }
    const at = (l, x) => l.reduce((v, [p, h, s]) => Math.max(v, h * Math.exp(-Math.pow((x - p) / s, 2))), 5);
    return wave(w, cy, 1, x => {
      const fade = Math.min(1, (w - x) / 14);
      return [at(up, x) * fade, at(dn, x) * fade];
    });
  },
  voice(a, w, cy) {
    const r = rng(Math.round(a * 100));
    const blobs = [];
    for (let p = 6; p < w; p += 11 + r() * 12) blobs.push([p, 3 + r() * 9, 4 + r() * 6]);
    return wave(w, cy, 1, x => {
      let v = 1.5;
      for (const [p, h, s] of blobs) v = Math.max(v, h * Math.exp(-Math.pow((x - p) / s, 2)));
      v += Math.abs(Math.sin(x * 1.9));
      return [v, v * .95];
    });
  }
};

/* MIDI notes of the 8-bar pattern: start, end (in bars), y */
const pattern = [];
for (let k = 0; k < 8; k++) {
  pattern.push([k + .1, k + .44, 5], [k, k + .04, 5], [k + .1, k + .44, 45], [k, k + .04, 45], [k + .12, k + .36, 58], [k, k + .04, 58]);
  if (k !== 3) pattern.push([k + .63, k + .92, 14], [k + .5, k + .54, 14], [k + .63, k + .92, 45], [k + .5, k + .54, 47], [k + .66, k + .86, 50]);
}
pattern.push([3.5, 3.58, 10], [3.76, 3.83, 10], [3.6, 3.68, 18], [3.5, 3.85, 35], [3.5, 3.88, 50], [6.08, 6.42, 27], [4, 4.03, 27]);
[[165, 197, 968], [199, 231, 988], [233, 265, 1008], [267, 298, 1018], [305, 334, 1038], [339, 396, 1038], [377, 406, 919], [411, 440, 1018], [428, 438, 900], [446, 478, 968], [479, 509, 988], [515, 544, 1008], [551, 573, 1018], [517, 537, 890], [551, 566, 900], [570, 576, 900], [586, 616, 919], [586, 616, 1038], [619, 624, 968], [625, 648, 988], [658, 682, 1008], [691, 719, 1018], [658, 679, 890], [691, 703, 900], [709, 719, 900]]
  .forEach(([s, e, y]) => pattern.push([(s - 163) / 70.5, (e - 163) / 70.5, Math.round((y - 732) / 2.25) + 5]));

const notes = (list, off, h) => list.map(([s, e, y]) => `<rect x="${Math.round((s + off) * BAR)}" y="${y}" width="${Math.max(2, Math.round((e - s) * BAR))}" height="${h}" fill="#222024"/>`).join('');

function clip(t, c) {
  const left = c.a <= 4.05 ? 2 : X(c.a), w = X(c.b) - left;
  let g = `<rect width="${w}" height="160" fill="${t.body}"/>`;
  for (let b = Math.ceil(c.a + .01); b < c.b; b++) g += `<rect x="${X(b) - left - 2}" width="2" height="160" fill="#444" fill-opacity=".75"/>`;
  if (c.fl) g += `<path fill="#555" d="M0 0H${c.fl}Q${c.fl / 3} 30 0 150Z"/>`;
  if (c.fr) g += `<path fill="#555" d="M${w} 0H${w - c.fr}Q${w - c.fr / 2} 100 ${w} 150Z"/>`;
  if (t.wave) g += waves[t.wave](c.a, w, 39) + waves[t.wave](c.a, w, 113);
  if (c.pattern) g += notes(pattern, c.off || 0, 5);
  if (c.notes) g += notes(c.notes, 0, 10);
  return `<div class="clip" style="left:${left}px;width:${w}px;--h:${t.head}"><b>${c.n}</b><svg width="${w}" height="160">${g}</svg></div>`;
}

/* ---------- tracks ---------- */
const V = [[4, 114], [14.727, 114, 1], [14.727, 53, 1], [15.21, 53, 1], [15.21, 153, 1], [15.48, 155, 1], [15.59, 114, 1], [16.71, 114, 1], [16.71, 55, 1], [17.165, 55, 1], [17.165, 114, 1], [20.71, 114, 1], [20.74, 61, 1], [21.12, 61, 1], [21.19, 122, 1], [24.58, 122, 1], [24.69, 70, 1], [25.22, 70, 1], [25.33, 122, 1], [26.6, 122, 1], [26.72, 61, 1], [27.14, 61, 1], [27.21, 122, 1], [29.47, 122, 1], [31.24, 122, 1], [31.24, 79, 1], [31.84, 79, 1], [31.84, 127, 1], [45.19, 127, 1], [45.19, 94, 1], [45.41, 96, 1], [45.455, 131, 1], [45.83, 133, 1], [45.95, 127, 1], [50, 127]];
const inf = '-∞';
const D = (v, p, dot) => ({ v, p, dot });
const tracks = [
  { n: 'REFERENCE TRACK', head: '#846ddb', body: '#696380', wave: 'mix', dev: ['Mixer', 'Track Volume'], io: ['Ext. In', 'mo:1', 'mon:2', 'Ext. Out', 'st:1/2'], off: 1, arm: 'rec', vol: D('0', 83), dash: 61, clips: [{ a: 19, b: 36.13, n: 'Identite_sonore' }] },
  { n: '2 LABS', head: '#d066dc', body: '#77617a', dev: ['*Mixer', '*Track Volume'], io: ['All Ins', 'ch:All Channels', 'mon:1', 'Main', ''], arm: 'midi', vol: D('-14.3', 50, 1), auto: [[[4, 186], [5.38, 186, 1], [36.06, 186, 1], [36.96, 110, 1], [39.81, 112, 1], [44.96, 175, 1], [45.83, 127, 1], [47.98, 90, 1], [48.3, 115]]], clips: [{ a: 37, b: 38, n: '2-LABS 3', notes: [[0, 1, 5], [0, 1, 123]] }, { a: 46, b: 50, n: '2-LABS 3', notes: [[0, 4, 5], [0, 4, 123]] }] },
  { n: 'VOIX RE-RECORD', head: '#f5ae44', body: '#786456', wave: 'voice', dev: ['*Mixer', '*Track Panning'], io: ['No Input', '', null, 'Main', ''], vol: D('-4.0', 75), pan: '9L', sends: [inf, inf, inf, D('-13.0', 65, 1), inf, D('-26.9', 35, 1), inf], auto: [V], clips: voice.map(([a, b], i) => ({ a, b, n: 'VOIX INTRO', fl: [0, 0, 8, 4, 10, 6, 10, 8, 5, 8, 14, 8][i], fr: [12, 8, 10, 12, 22, 12, 10, 6, 10, 18, 16, 0][i] })) },
  { n: '4 DX7 V', head: '#d066dc', body: '#77617a', dev: ['Mixer', 'Track Volume'], io: ['All Ins', 'ch:All Channels', 'mon:1', 'Main', ''], arm: 'midi', vol: D('-8.0', 65), dash: 90, clips: [{ a: 6, b: 14, n: 'PATTERN 1', pattern: 1 }, { a: 14, b: 22, n: 'PATTERN 1', pattern: 1 }, { a: 37.88, b: 46, n: 'PATTERN 1', pattern: 1, off: .12 }] },
  { n: 'MINIPOP LOOP', head: '#58beaf', body: '#497068', wave: 'loop', dev: ['*Sugar', '*Device On'], io: ['No Input', '', null, 'Main', ''], vol: D('-4.0', 75), auto: [[[4, 74], [50, 74]]], clips: [{ a: 4, b: 37, n: 'MINIPOP LOOP 1' }, { a: 38, b: 46.08, n: 'MINIPOP LOOP 1' }, { a: 46.08, b: 50, n: 'MINIPOP LOOP 1' }] },
  { n: '6 Pigments', head: '#f299a5', body: '#7a6460', dev: ['Pigments', 'Device On'], io: ['All Ins', 'ch:All Channels', 'mon:1', 'Main', ''], arm: 'midi', vol: D('0', 83), sends: [inf, D('-1.6', 95), D('-2.2', 92), D('-16.5', 55), D('-6.0', 85), inf, D('-7.3', 82)], dash: 75, sel: 1, clips: [] },
  { n: 'BUCHLA SEQS', head: '#f8f48c', body: '#6a6a4e', wave: 'seq', dev: ['Mixer', 'Track Volume'], io: ['No Input', '', null, 'Main', ''], vol: D('-6.0', 70), dash: 83, clips: [{ a: 22, b: 29.47, n: 'SEQ 1', fr: 14 }, { a: 30, b: 37, n: 'SEQ 2', fr: 14 }, { a: 38, b: 46, n: 'SEQ 2', fr: 32 }] },
  { n: '8 Solina V2', head: '#e5732d', body: '#7a6256', dev: ['*Mixer', '*Track Volume'], io: ['All Ins', 'ch:All Channels', 'mon:1', 'Main', ''], arm: 'midi', vol: D('-10.0', 59, 1), sends: [inf, inf, D('0', 100), inf, inf, inf, inf], auto: [[[4, 97], [29.44, 97, 1], [29.6, 104]], [[34.97, 97, 1], [50, 97]]], clips: [{ a: 22, b: 32, n: '10-Solina V2 3', notes: [[0, 1.9, 5], [2, 3.88, 62], [7.56, 9.75, 58], [9.96, 10, 5]] }, { a: 38, b: 46, n: '10-Solina V2 3', notes: [[0, 1.9, 5], [2, 3.88, 62], [7.5, 8, 62]] }] }
];

const select = (label, text, icon = '') => `<span class="dd${icon && icon !== '<i class="dot"></i>' ? ' ic' : ''}">${icon}<select aria-label="${label}"><option>${text}</option></select></span>`;

function ioCell(v, name) {
  if (v === null) return '<span class="none-row"></span>';
  if (v === '') return '<span class="blank"></span>';
  const [k, t] = v.split(':');
  if (k === 'mon') return `<div class="mon">${['In', 'Auto', 'Off'].map((s, i) => `<button class="${+t === i ? 'on' : ''}">${s}</button>`).join('')}</div>`;
  return t ? select(name, t, `<i class="${k}"></i>`) : select(name, v);
}
const num = (d, wide, name) => {
  const o = typeof d === 'string' ? D(d, 0) : d;
  return `<span class="cellbox"><input class="num${wide ? ' wide' : ''}${o.v === '9L' ? ' pan' : ''}" value="${o.v}" style="--v:${o.p}%" aria-label="${name}">${o.dot ? '<i class="dot"></i>' : ''}</span>`;
};
const armIcon = { rec: '<svg width="18" height="18"><circle class="fill" cx="9" cy="9" r="8"/></svg>', midi: '<svg width="18" height="18"><circle class="fill" cx="9" cy="9" r="8"/><path d="M10 3v9H7" stroke="#cfcfcf" stroke-width="3"/></svg>' };

$('tracks').innerHTML = tracks.map((t, i) => {
  let auto = '';
  if (t.dash) auto = `<path class="dash" d="M2 ${t.dash}H${X(50)}"/>`;
  for (const l of t.auto || []) {
    auto += `<path d="M${l.map(([b, y]) => X(b) + ' ' + y).join('L')}"/>`;
    auto += l.filter(p => p[2]).map(([b, y]) => `<circle cx="${X(b)}" cy="${y}" r="4"/>`).join('');
  }
  const s = t.sends || [inf, inf, inf, inf, inf, inf, inf];
  const dev = t.dev.map(d => d[0] === '*' ? select('Paramètre', d.slice(1), '<i class="dot"></i>') : select('Paramètre', d)).join('');
  return `<div class="track${t.sel ? ' selected' : ''}">
    <div class="lane">${t.clips.map(c => clip(t, c)).join('')}<svg class="auto">${auto}</svg>${t.sel ? `<i class="cursor" style="left:${X(40)}px"></i>` : ''}</div>
    <div class="thead" style="--h:${t.head};--b:${t.body}"><div class="name"><span class="fold"><i class="tri"></i></span>${t.n}</div>${dev}<button class="plus" aria-label="Ajouter une ligne">+</button></div>
    <div class="io">${t.io.map(v => ioCell(v, 'Entrée/Sortie')).join('')}</div>
    <div class="mix"><div class="strip">
      <div class="mrow"><button class="act${t.off ? ' off' : ''}">${i + 1}</button><button class="sb">S</button>${t.arm ? `<button class="sb" aria-label="Armer">${armIcon[t.arm]}</button>` : ''}</div>
      <div class="mrow">${num(t.vol, 1, 'Volume')}${num(t.pan ? D(t.pan, 0, 1) : 'C', 1, 'Pan')}</div>
      <div class="sends">${s.slice(0, 3).map(v => num(v, 0, 'Send')).join('')}</div>
      <div class="sends">${s.slice(3, 6).map(v => num(v, 0, 'Send')).join('')}</div>
      <div class="sends">${num(s[6], 0, 'Send')}</div>
    </div><div class="meter"><i></i><i></i></div></div>
  </div>`;
}).join('');
```
